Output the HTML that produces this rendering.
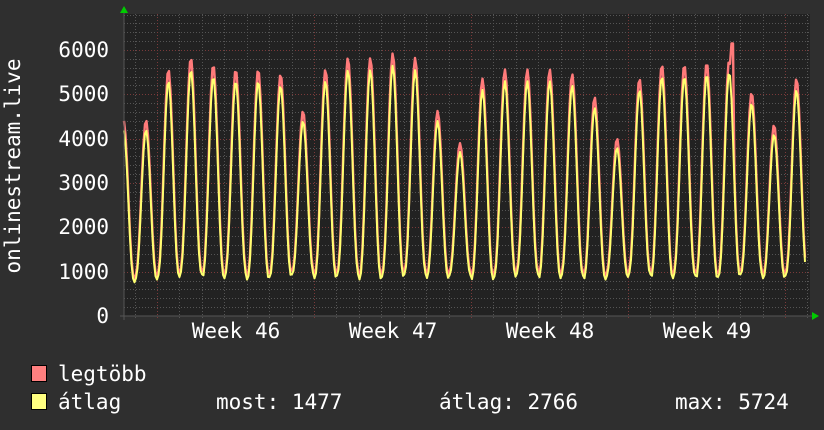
<!DOCTYPE html>
<html><head><meta charset="utf-8"><style>
html,body{margin:0;padding:0;background:#2f2f2f;}
svg{display:block;}
text{font-family:"DejaVu Sans Mono","Liberation Mono",monospace;fill:#fff;font-size:21px;}
</style></head><body>
<svg id="g" width="824" height="430" xmlns="http://www.w3.org/2000/svg">
<rect width="824" height="430" fill="#2f2f2f"/>
<rect x="124" y="14" width="686" height="302" fill="#222"/>
<g id="grid"></g>
<polyline id="mx" fill="none" stroke="#ff7a7a" stroke-width="2.4" stroke-linejoin="round"/>
<polyline id="av" fill="none" stroke="#ffff70" stroke-width="2" stroke-linejoin="round"/>
<line x1="120" y1="316" x2="812" y2="316" stroke="#555" stroke-width="1"/>
<line x1="124" y1="12" x2="124" y2="320" stroke="#555" stroke-width="1"/>
<polygon points="120,13 128,13 124,6" fill="#0c0"/>
<polygon points="812,312 812,320 819,316" fill="#0c0"/>
<g text-anchor="end">
<text x="109" y="57">6000</text><text x="109" y="101">5000</text><text x="109" y="146">4000</text>
<text x="109" y="190">3000</text><text x="109" y="234">2000</text><text x="109" y="279">1000</text>
<text x="109" y="323">0</text></g>
<text x="20" y="166" text-anchor="middle" transform="rotate(-90 20 166)">onlinestream.live</text>
<g text-anchor="middle"><text x="236" y="338">Week 46</text><text x="393" y="338">Week 47</text>
<text x="550" y="338">Week 48</text><text x="707" y="338">Week 49</text></g>
<rect x="31.5" y="365.5" width="15" height="16" fill="#ff8080" stroke="#000"/>
<rect x="31.5" y="393.5" width="15" height="16" fill="#ffff80" stroke="#000"/>
<text x="58" y="381">legtöbb</text>
<text x="58" y="409">átlag</text>
<text x="216" y="409">most: 1477</text>
<text x="439" y="409">átlag: 2766</text>
<text x="675" y="409">max: 5724</text>
</svg>
<script>
var ns="http://www.w3.org/2000/svg",g=document.getElementById('grid');
function ln(x1,y1,x2,y2,c){var l=document.createElementNS(ns,'line');l.setAttribute('x1',x1);l.setAttribute('y1',y1);l.setAttribute('x2',x2);l.setAttribute('y2',y2);l.setAttribute('stroke',c);l.setAttribute('stroke-width',1);l.setAttribute('stroke-dasharray','1,2');g.appendChild(l);}
var u=44.33;
for(var i=1;i<=34;i++){var y=316-i*u/5;if(y<14)break;ln(124,Math.round(y)+.5,810,Math.round(y)+.5,i%5==0?'#7a3a3a':'#555');}
for(var x=134.5,k=0;x<810;x+=22.43,k++){var xx=Math.round(x)+.5;var major=Math.abs(((xx-157)%157))<2;ln(xx,14,xx,318,major?'#7a3a3a':'#555');}
var peaks=[4200,5300,5550,5400,5300,5300,5200,4400,5300,5550,5550,5650,5550,4400,3700,5100,5300,5300,5300,5200,4700,3800,5100,5400,5400,5450,5500,4800,4100,5100];
var P=22.43,x0=146;
function val(x){var t=(x-x0)/P;var n=Math.round(t);var i=Math.max(0,Math.min(29,n));var ph=(t-n)*2*Math.PI;var c=(1+Math.cos(ph))/2;var lo=820+((n*37)%5)*30;return lo+(peaks[i]-lo)*Math.pow(c,1.3);}
var a=[],m=[];
for(var x=124;x<=806;x+=1.5){var v=val(x);if(x>800)v=Math.min(v,1477+ (806-x)*400);var vm=v*1.04+50;if(Math.abs(x-732)<1.6)vm=6150;a.push(x+','+(316-v/1000*u).toFixed(1));m.push(x+','+(316-vm/1000*u).toFixed(1));}
document.getElementById('av').setAttribute('points',a.join(' '));
document.getElementById('mx').setAttribute('points',m.join(' '));
</script>
</body></html>
